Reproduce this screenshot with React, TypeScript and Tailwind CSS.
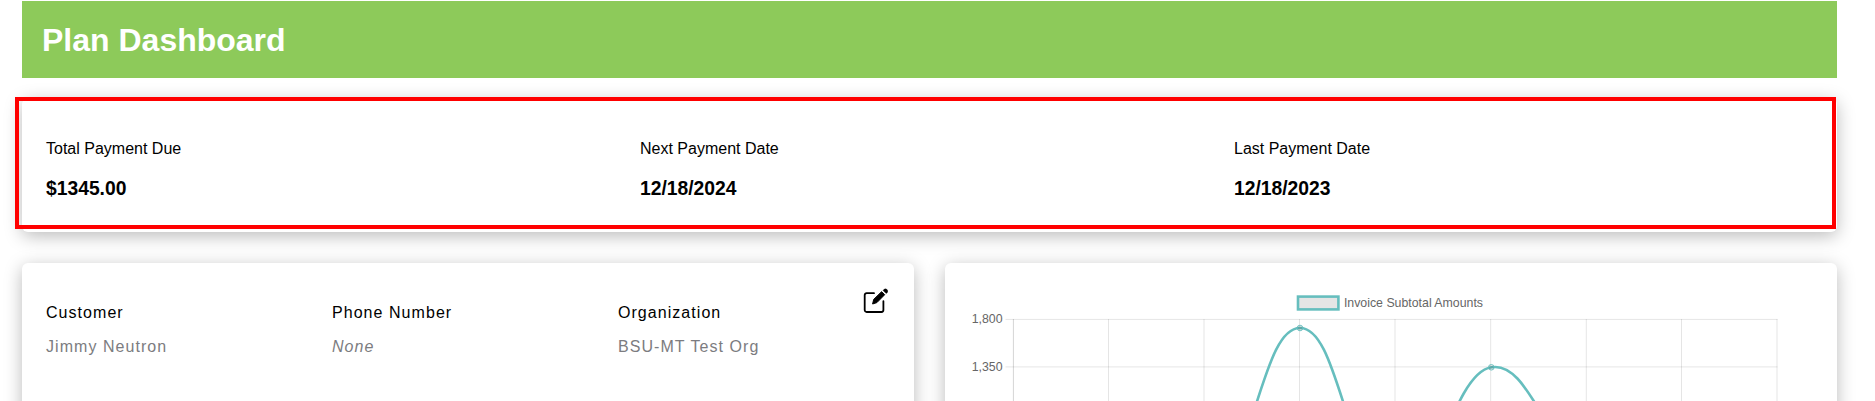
import type { ReactNode } from "react";

const summary = [
  { label: "Total Payment Due", value: "$1345.00" },
  { label: "Next Payment Date", value: "12/18/2024" },
  { label: "Last Payment Date", value: "12/18/2023" },
];

const details = [
  { label: "Customer", value: "Jimmy Neutron" },
  { label: "Phone Number", value: null },
  { label: "Organization", value: "BSU-MT Test Org" },
];

function Card({ className, children }: { className: string; children: ReactNode }) {
  return (
    <section
      className={`rounded-[6px] bg-white shadow-[0_4px_18px_0_rgba(0,0,0,0.27)] ${className}`}
    >
      {children}
    </section>
  );
}

function EditIcon() {
  return (
    <svg width="28" height="28" viewBox="0 0 28 28" fill="none">
      <path
        d="M14 7.2H6.6A1.9 1.9 0 0 0 4.7 9.1V24.1A1.9 1.9 0 0 0 6.6 26H21.5A1.9 1.9 0 0 0 23.4 24.1V15.2"
        stroke="#000"
        strokeWidth="1.8"
        strokeLinecap="round"
      />
      <path d="M12.6 18 13.7 13.4 21.6 5.7 24.7 8.7 16.9 16.6Z" fill="#000" stroke="#000" strokeWidth="1" strokeLinejoin="round" />
      <path
        d="M23 4.4 24.1 3.2A2.4 2.4 0 0 1 27.4 6.5L26.2 7.6Z"
        fill="#000"
        stroke="#000"
        strokeWidth="0.3"
        strokeLinejoin="round"
      />
    </svg>
  );
}

const columns = [96, 191.5, 287, 382.5, 478.2, 573.8, 669, 764.5];

function InvoiceChart() {
  return (
    <svg
      width="892"
      height="218"
      viewBox="0 0 892 218"
      className="block font-['Liberation_Sans',Arial,sans-serif] text-[12.33px]"
    >
      <rect x="353" y="33.6" width="40.4" height="12.8" fill="#e5e5e5" stroke="#66bebe" strokeWidth="2.6" />
      <text x="398.9" y="44.2" fill="#666">Invoice Subtotal Amounts</text>
      <text x="57.6" y="60" textAnchor="end" fill="#666">1,800</text>
      <text x="57.6" y="107.8" textAnchor="end" fill="#666">1,350</text>
      <g stroke="#000" strokeOpacity="0.1">
        <path d="M60.5 56.4H832.5M60.5 103.9H832.5" />
        <path d="M68.4 56V218" strokeOpacity="0.17" />
        {columns.map((x) => (
          <path key={x} d={`M${x + 67.5} 56V218`} />
        ))}
      </g>
      <g transform="translate(-945 -263)">
        <path
          d="M1204.4 509C1256.5 460 1261.8 328 1300 328C1338.2 328 1343.5 460 1395.5 509C1430.3 516 1450.4 373.5 1491.3 367.3C1526.8 360.9 1543 438 1586.8 470"
          fill="none"
          stroke="#66bebe"
          strokeWidth="2.6"
        />
        <g fill="#000" fillOpacity="0.1" stroke="#66bebe" strokeWidth="0.9">
          <circle cx="1300" cy="328" r="2.8" />
          <circle cx="1491.3" cy="367.3" r="2.8" />
        </g>
      </g>
    </svg>
  );
}

export default function App() {
  return (
    <main className="h-[401px] w-[1875px] overflow-hidden bg-white pl-[22px] pr-[38px] pt-px font-['Liberation_Sans',Arial,sans-serif] text-base leading-5 text-black">
      <header className="flex h-[77px] items-center bg-[#8dca5a] pl-5 pt-px">
        <h1 className="text-[32px] font-bold text-white">Plan Dashboard</h1>
      </header>

      <div className="relative mt-5">
        <Card className="grid h-[134px] grid-cols-3 pl-6 pr-[9px] pt-[41px]">
          {summary.map(({ label, value }) => (
            <div key={label}>
              <p>{label}</p>
              <p className="mt-5 text-[19.3px] font-bold">{value}</p>
            </div>
          ))}
        </Card>
        <div className="pointer-events-none absolute -left-[7px] -top-px h-[132px] w-[1821px] border-4 border-[#ff0000]" />
      </div>

      <div className="mt-[31px] flex gap-[31px]">
        <Card className="relative grid h-[300px] w-[892px] grid-cols-3 pl-6 pr-[10px] pt-[40px] tracking-[1.05px]">
          {details.map(({ label, value }) => (
            <div key={label}>
              <p>{label}</p>
              <p className="mt-3.5 text-[#7c7c80]">{value ?? <i>None</i>}</p>
            </div>
          ))}
          <button aria-label="Edit" className="absolute right-[26px] top-[23px]">
            <EditIcon />
          </button>
        </Card>
        <Card className="h-[300px] w-[892px]">
          <InvoiceChart />
        </Card>
      </div>
    </main>
  );
}
